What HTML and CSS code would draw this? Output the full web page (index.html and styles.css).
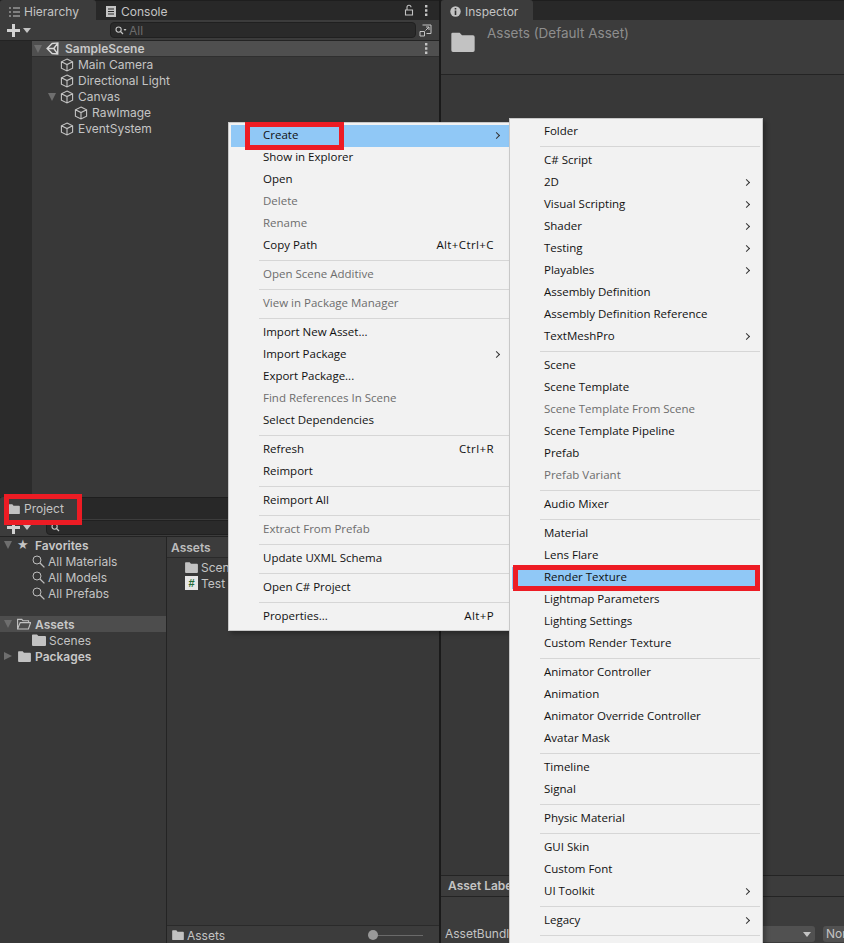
FILE: index.html
```html
<!DOCTYPE html>
<html lang="en">
<head>
<meta charset="utf-8">
<title>Unity Editor</title>
<link rel="stylesheet" href="styles.css">
</head>
<body>
<svg width="0" height="0" class="defs">
  <symbol id="cube" viewBox="0 0 14 14"><path d="M7 1 L12.6 3.8 V10.2 L7 13 L1.4 10.2 V3.8 Z M1.4 3.8 L7 6.6 L12.6 3.8 M7 6.6 V13" fill="none" stroke="#c4c4c4" stroke-width="1.1"/></symbol>
  <symbol id="folder" viewBox="0 0 14 12"><path d="M0 1.2 Q0 .4 .8 .4 H5 L6.4 2 H13 Q14 2 14 3 V11 Q14 12 13 12 H1 Q0 12 0 11 Z" fill="#c2c2c2"/></symbol>
  <symbol id="lens" viewBox="0 0 13 13"><circle cx="5" cy="5" r="4" fill="none" stroke="#bdbdbd" stroke-width="1"/><path d="M8 8 L12.4 12.4" stroke="#bdbdbd" stroke-width="1.3"/></symbol>
</svg>
<div class="editor">
  <div class="left">
    <section class="hierarchy">
      <div class="tabbar">
        <div class="tab active"><svg viewBox="0 0 11 10" width="11" height="10"><path d="M0 1h2M0 5h2M0 9h2M4 1h7M4 5h7M4 9h7" stroke="#c4c4c4" stroke-width="1"/></svg>Hierarchy</div>
        <div class="tab"><svg viewBox="0 0 10 11" width="10" height="11"><path d="M0 0H10V11H0Z" fill="#c4c4c4"/><path d="M2 3H8M2 5.5H8M2 8H8" stroke="#282828"/></svg>Console</div>
        <div class="tabtools">
          <svg viewBox="0 0 10 12" width="10" height="12"><path d="M1.5 6H8.5V11H1.5Z M3 6V3.2A2 2 0 0 1 7 3.2" fill="none" stroke="#c4c4c4" stroke-width="1.1"/></svg>
          <svg viewBox="0 0 3 11" width="3" height="11"><path d="M0 0h2.4v2.4H0zM0 4.3h2.4v2.4H0zM0 8.6h2.4V11H0z" fill="#c4c4c4"/></svg>
        </div>
      </div>
      <div class="toolbar">
        <span class="plus"><i></i></span>
        <span class="caret"></span>
        <div class="search">
          <svg viewBox="0 0 12 9" width="12" height="9"><circle cx="3.6" cy="3.6" r="2.6" fill="none" stroke="#c4c4c4" stroke-width="1.1"/><path d="M5.5 5.5L8 8" stroke="#c4c4c4" stroke-width="1.2"/><path d="M8.5 3h3l-1.5 2z" fill="#c4c4c4"/></svg>
          <span>All</span>
        </div>
        <div class="sbtn"><svg viewBox="0 0 13 13" width="13" height="13"><path d="M3.5 1H12V9.5H7.5M1 7.5H5.5V12H1ZM6.5 6.5L10 3M7 3H10V6" fill="none" stroke="#c4c4c4" stroke-width="1"/></svg></div>
      </div>
      <div class="tree">
        <div class="strip"></div>
        <div class="treebody">
          <div class="scene-row">
            <span class="tri down"></span>
            <svg class="unity" viewBox="0 0 14 14" width="13" height="13"><path d="M1.2 7 L6.6 1.6 L12.8 1 L12.6 12.8 L6.6 12.4 Z M1.2 7 H8.4 M8.4 7 L12.8 1 M8.4 7 L12.6 12.8" fill="none" stroke="#d8d8d8" stroke-width="1.5"/></svg>
            <b>SampleScene</b>
            <svg class="kebab" viewBox="0 0 3 11" width="3" height="11"><path d="M0 0h2.4v2.4H0zM0 4.3h2.4v2.4H0zM0 8.6h2.4V11H0z" fill="#c4c4c4"/></svg>
          </div>
          <div class="node"><svg class="cube"><use href="#cube"/></svg>Main Camera</div>
          <div class="node"><svg class="cube"><use href="#cube"/></svg>Directional Light</div>
          <div class="node"><span class="tri down small"></span><svg class="cube"><use href="#cube"/></svg>Canvas</div>
          <div class="node deep"><svg class="cube"><use href="#cube"/></svg>RawImage</div>
          <div class="node"><svg class="cube"><use href="#cube"/></svg>EventSystem</div>
        </div>
      </div>
    </section>

    <section class="project">
      <div class="tabbar ptab">
        <div class="tab active project-tab"><svg class="fold14"><use href="#folder"/></svg>Project</div>
      </div>
      <div class="toolbar ptool">
        <span class="plus"><i></i></span>
        <span class="caret"></span>
        <div class="search psearch"><svg viewBox="0 0 12 9" width="12" height="9"><circle cx="3.6" cy="3.6" r="2.6" fill="none" stroke="#c4c4c4" stroke-width="1.1"/><path d="M5.5 5.5L8 8" stroke="#c4c4c4" stroke-width="1.2"/></svg></div>
      </div>
      <div class="panes">
        <div class="pane-l">
          <div class="prow fav"><span class="tri down"></span><span class="star">★</span><b>Favorites</b></div>
          <div class="prow sub"><svg class="lens"><use href="#lens"/></svg>All Materials</div>
          <div class="prow sub"><svg class="lens"><use href="#lens"/></svg>All Models</div>
          <div class="prow sub"><svg class="lens"><use href="#lens"/></svg>All Prefabs</div>
          <div class="prow sel gap"><span class="tri down"></span><svg class="open" viewBox="0 0 14 12" width="14" height="12"><path d="M.6 11V1.4H4.8L6 2.8H11.6V4.6H3.2L.6 11H11.4L13.6 4.6H3.2" fill="none" stroke="#c2c2c2" stroke-width="1.1"/></svg><b>Assets</b></div>
          <div class="prow sub"><svg class="fold12"><use href="#folder"/></svg>Scenes</div>
          <div class="prow"><span class="tri right"></span><svg class="mr"><use href="#folder"/></svg><b>Packages</b></div>
        </div>
        <div class="pane-r">
          <div class="assets-head">Assets</div>
          <div class="assets-list">
            <div class="arow"><svg class="fold12"><use href="#folder"/></svg>Scenes</div>
            <div class="arow"><span class="hash">#</span>Test</div>
          </div>
          <div class="assets-foot">
            <svg class="fold13"><use href="#folder"/></svg><span>Assets</span>
            <div class="slider"><i></i></div>
          </div>
        </div>
      </div>
    </section>
  </div>

  <section class="inspector">
    <div class="tabbar">
      <div class="tab active itab"><svg viewBox="0 0 11 11" width="11" height="11"><circle cx="5.5" cy="5.5" r="5.2" fill="#c4c4c4"/><path d="M4.7 2h1.6v1.6H4.7zM4.7 4.6h1.6V9H4.7z" fill="#333"/></svg>Inspector</div>
    </div>
    <div class="ihead">
      <svg class="bigfold"><use href="#folder"/></svg>
      <span>Assets (Default Asset)</span>
    </div>
    <div class="ibody"></div>
    <div class="ilabels">Asset Labels</div>
    <div class="ibundle">
      <span>AssetBundle</span>
      <div class="dd1"><i></i></div>
      <div class="dd2">None</div>
    </div>
  </section>
</div>

<nav class="menu main">
  <div class="mi hot">Create<em class="chev"></em></div>
  <div class="mi">Show in Explorer</div>
  <div class="mi">Open</div>
  <div class="mi off">Delete</div>
  <div class="mi off">Rename</div>
  <div class="mi">Copy Path<kbd>Alt+Ctrl+C</kbd></div>
  <hr>
  <div class="mi off">Open Scene Additive</div>
  <hr>
  <div class="mi off">View in Package Manager</div>
  <hr>
  <div class="mi">Import New Asset...</div>
  <div class="mi">Import Package<em class="chev"></em></div>
  <div class="mi">Export Package...</div>
  <div class="mi off">Find References In Scene</div>
  <div class="mi">Select Dependencies</div>
  <hr>
  <div class="mi">Refresh<kbd>Ctrl+R</kbd></div>
  <div class="mi">Reimport</div>
  <hr>
  <div class="mi">Reimport All</div>
  <hr>
  <div class="mi off">Extract From Prefab</div>
  <hr>
  <div class="mi">Update UXML Schema</div>
  <hr>
  <div class="mi">Open C# Project</div>
  <hr>
  <div class="mi">Properties...<kbd>Alt+P</kbd></div>
</nav>

<nav class="menu submenu">
  <div class="mi">Folder</div>
  <hr>
  <div class="mi">C# Script</div>
  <div class="mi">2D<em class="chev"></em></div>
  <div class="mi">Visual Scripting<em class="chev"></em></div>
  <div class="mi">Shader<em class="chev"></em></div>
  <div class="mi">Testing<em class="chev"></em></div>
  <div class="mi">Playables<em class="chev"></em></div>
  <div class="mi">Assembly Definition</div>
  <div class="mi">Assembly Definition Reference</div>
  <div class="mi">TextMeshPro<em class="chev"></em></div>
  <hr>
  <div class="mi">Scene</div>
  <div class="mi">Scene Template</div>
  <div class="mi off">Scene Template From Scene</div>
  <div class="mi">Scene Template Pipeline</div>
  <div class="mi">Prefab</div>
  <div class="mi off">Prefab Variant</div>
  <hr>
  <div class="mi">Audio Mixer</div>
  <hr>
  <div class="mi">Material</div>
  <div class="mi">Lens Flare</div>
  <div class="mi hot">Render Texture</div>
  <div class="mi">Lightmap Parameters</div>
  <div class="mi">Lighting Settings</div>
  <div class="mi">Custom Render Texture</div>
  <hr>
  <div class="mi">Animator Controller</div>
  <div class="mi">Animation</div>
  <div class="mi">Animator Override Controller</div>
  <div class="mi">Avatar Mask</div>
  <hr>
  <div class="mi">Timeline</div>
  <div class="mi">Signal</div>
  <hr>
  <div class="mi">Physic Material</div>
  <hr>
  <div class="mi">GUI Skin</div>
  <div class="mi">Custom Font</div>
  <div class="mi">UI Toolkit<em class="chev"></em></div>
  <hr>
  <div class="mi">Legacy<em class="chev"></em></div>
  <hr>
</nav>

<div class="mark m-create"></div>
<div class="mark m-project"></div>
<div class="mark m-render"></div>
</body>
</html>
```

FILE: styles.css
```css
* { box-sizing: border-box; }
html, body { margin: 0; padding: 0; }
body {
  width: 844px; height: 943px; overflow: hidden; position: relative;
  background: #191919;
  font-family: Inter, "Noto Sans", sans-serif;
  font-size: 12px; color: #c4c4c4;
}
.defs { position: absolute; }
.editor { display: grid; grid-template-columns: 439px 1fr; column-gap: 2px; height: 943px; background: #1a1a1a; }
.left { display: grid; grid-template-rows: 497px 1fr; min-height: 0; }
section { min-width: 0; min-height: 0; display: flex; flex-direction: column; background: #383838; overflow: hidden; }

.tabbar { height: 20px; flex: none; display: flex; background: #282828; box-shadow: inset 0 1px 0 #1e1e1e; position: relative; }
.tab { display: flex; align-items: center; gap: 4px; padding: 3px 14px 0 9px; height: 20px; line-height: 17px; }
.tab.active { background: #3c3c3c; border-radius: 3px 3px 0 0; }
.hierarchy .tab.active { width: 96px; }
.hierarchy .tab + .tab { padding-left: 10px; gap: 5px; }
.tabtools { margin-left: auto; display: flex; align-items: center; gap: 11px; padding-right: 11px; }

.toolbar { height: 21px; flex: none; background: #3c3c3c; border-bottom: 1px solid #232323; display: flex; align-items: center; padding-left: 7px; }
.plus { width: 13px; height: 13px; position: relative; display: block; }
.plus i { position: absolute; left: 0; right: 0; top: 5px; height: 3px; background: #d2d2d2; }
.plus::after { content: ""; position: absolute; top: 0; bottom: 0; left: 5px; width: 3px; background: #d2d2d2; }
.caret { width: 0; height: 0; border: 4px solid transparent; border-top: 5px solid #c4c4c4; border-bottom: 0; margin-left: 3px; }
.search { margin-left: 79px; flex: 1; height: 16px; background: #2a2a2a; border: 1px solid #202020; border-radius: 4px; display: flex; align-items: center; gap: 2px; padding-left: 4px; color: #6c6c6c; min-width: 0; }
.sbtn { width: 17px; height: 16px; margin: 0 5px 0 1px; background: #3c3c3c; border-radius: 3px; display: flex; align-items: center; justify-content: center; }

.tree { flex: 1; display: flex; min-height: 0; }
.strip { width: 32px; background: #2b2b2b; }
.treebody { flex: 1; }
.scene-row { height: 16px; background: #4f4f4f; border-bottom: 1px solid #2f2f2f; display: flex; align-items: center; position: relative; font-weight: 700; }
.scene-row b { font-weight: 600; margin-left: 6px; color: #c8c8c8; }
.scene-row .tri { margin-left: 2px; margin-right: 4px; }
.tri { display: inline-block; width: 0; height: 0; flex: none; }
.tri.down { border-left: 4.5px solid transparent; border-right: 4.5px solid transparent; border-top: 8px solid #6e6e6e; }
.tri.right { border-top: 4.5px solid transparent; border-bottom: 4.5px solid transparent; border-left: 8px solid #6e6e6e; margin-right: 1px; }
.kebab { margin-left: auto; margin-right: 11px; }
.node { height: 16px; display: flex; align-items: center; padding-left: 28px; line-height: 16px; }
.node .cube { width: 14px; height: 14px; margin-right: 4px; flex: none; }
.node.deep { padding-left: 42px; }
.node .small { margin-left: -12px; margin-right: 4px; }

.ptab { height: 22px; }
.project-tab { width: 82px; height: 22px; padding: 1px 14px 0 8px; background: #3c3c3c; }
.fold14 { width: 12px; height: 10px; flex: none; }
.ptool { height: 18px; }
.psearch { margin-left: 15px; height: 15px; }
.panes { flex: 1; display: grid; grid-template-columns: 166px 1fr; column-gap: 1px; background: #242424; min-height: 0; }
.pane-l { background: #383838; }
.pane-r { background: #383838; display: flex; flex-direction: column; }
.prow { height: 16px; display: flex; align-items: center; padding-left: 4px; position: relative; }
.prow b { font-weight: 600; color: #c8c8c8; margin-left: 4px; }
.prow.fav b { margin-left: 5px; }
.prow .tri.down { margin-right: 5px; }
.star { font-size: 13px; line-height: 16px; width: 13px; color: #c4c4c4; font-family: "DejaVu Sans", sans-serif; }
.prow.sub { padding-left: 32px; }
.prow.sub .lens { width: 13px; height: 13px; margin-right: 3px; }
.prow.sub .fold12 { width: 14px; height: 12px; margin-right: 3px; }
.mr { width: 13px; height: 11px; margin-left: 5px; flex: none; }
.fold12 { width: 13px; height: 11px; flex: none; }
.sel { background: #4d4d4d; }
.gap { margin-top: 15px; }
.assets-head { height: 21px; line-height: 21px; padding-left: 4px; font-weight: 600; background: #3c3c3c; border-bottom: 1px solid #2a2a2a; flex: none; color: #bdbdbd; }
.assets-list { flex: 1; padding: 1px 0 0 18px; }
.arow { height: 16px; display: flex; align-items: center; gap: 3px; }
.hash { width: 13px; height: 14px; background: #e6e6e6; color: #1f6a36; font: 700 11px/14px "Liberation Sans", sans-serif; text-align: center; flex: none; }
.assets-foot { height: 18px; flex: none; background: #3c3c3c; border-top: 1px solid #2a2a2a; display: flex; align-items: center; padding: 1px 0 0 5px; gap: 3px; position: relative; }
.fold13 { width: 12px; height: 10px; flex: none; }
.slider { margin-left: auto; margin-right: 16px; width: 55px; height: 1px; background: #6a6a6a; position: relative; }
.slider i { position: absolute; left: 0; top: -5px; width: 10px; height: 10px; border-radius: 50%; background: #999; }

.itab { width: 92px; }
.ihead { height: 55px; flex: none; background: #3c3c3c; border-bottom: 1px solid #242424; display: flex; align-items: flex-start; padding: 5px 0 0 10px; gap: 12px; color: #8e8e8e; font-size: 13.5px; }
.bigfold { width: 24px; height: 20px; margin-top: 7px; }
.ibody { flex: 1; }
.ilabels { height: 22px; flex: none; background: #3c3c3c; border-top: 1px solid #242424; border-bottom: 1px solid #242424; padding-left: 7px; line-height: 20px; font-weight: 600; }
.ibundle { height: 46px; flex: none; background: #3c3c3c; display: flex; align-items: flex-end; padding: 0 0 1px 4px; line-height: 16px; }
.ibundle span { width: 115px; flex: none; }
.dd1 { width: 255px; height: 16px; background: #515151; border-radius: 3px; position: relative; flex: none; }
.dd1 i { position: absolute; right: 4px; top: 6px; width: 0; height: 0; border: 4px solid transparent; border-top: 5px solid #c4c4c4; border-bottom: 0; }
.dd2 { margin-left: 8px; width: 40px; height: 16px; background: #515151; border-radius: 3px 0 0 3px; padding-left: 3px; flex: none; }

.menu { position: absolute; background: #f2f2f2; border: 1px solid #c8c8c8; color: #111; font-family: "Open Sans", "Noto Sans", sans-serif; font-size: 11.5px; box-shadow: 3px 3px 4px rgba(0,0,0,.25); }
.main { left: 228px; top: 122px; width: 282px; padding: 2px 0 2px 2px; }
.submenu { left: 509px; top: 118px; width: 254px; height: 840px; padding: 2px; }
.mi { height: 22px; line-height: 20px; padding-left: 32px; position: relative; white-space: nowrap; }
.mi.off { color: #6d6d6d; }
.mi.hot { background: #90c8f6; }
hr { border: 0; height: 1px; background: #d6d6d6; margin: 3px 0 3px 28px; }
kbd { position: absolute; right: 15px; top: 0; font: inherit; letter-spacing: .4px; }
.chev { position: absolute; right: 10px; top: 8px; width: 5px; height: 5px; border-top: 1px solid #333; border-right: 1px solid #333; transform: rotate(45deg); }
.submenu .chev { right: 11px; }

.mark { position: absolute; border: 5px solid #ed1c24; }
.m-create { left: 245px; top: 122px; width: 99px; height: 28px; }
.m-project { left: 4px; top: 494px; width: 78px; height: 31px; }
.m-render { left: 513px; top: 565px; width: 247px; height: 26px; }
```
